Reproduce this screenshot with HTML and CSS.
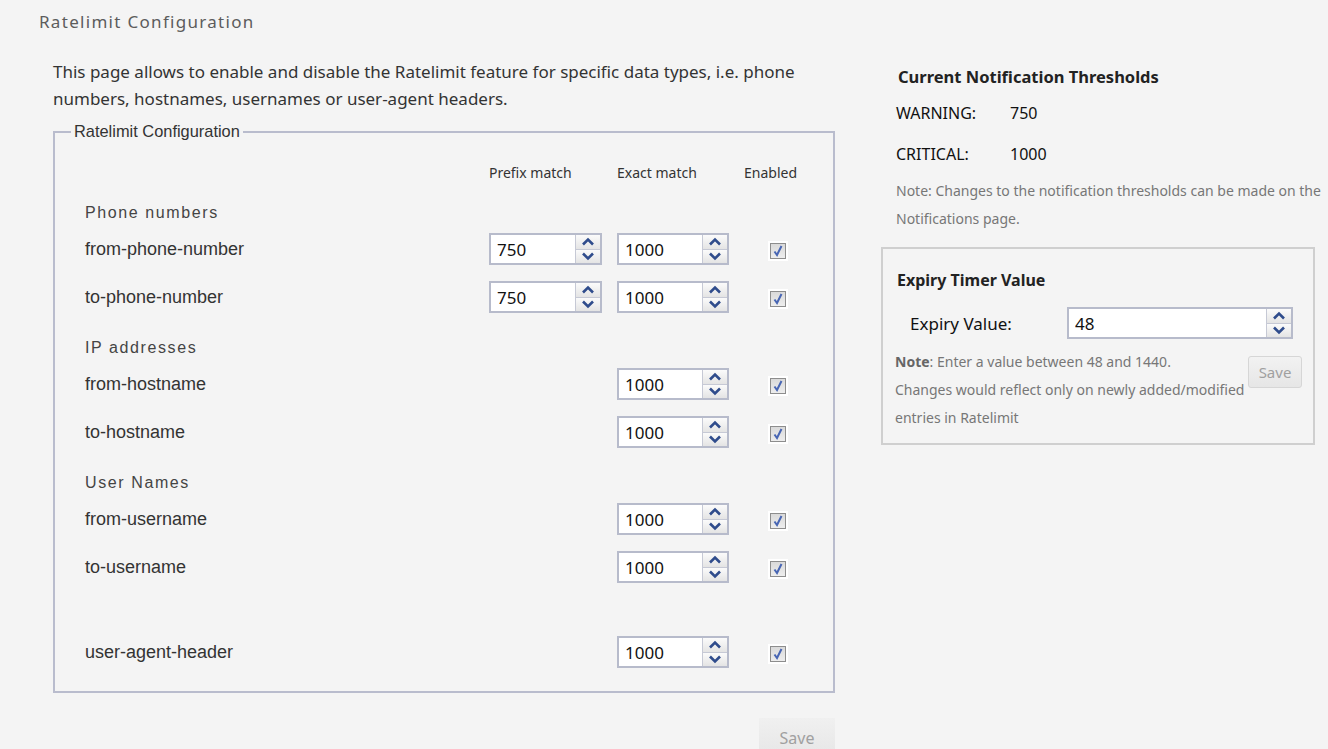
FILE: index.html
```html
<!DOCTYPE html>
<html lang="en">

<head>
    <meta charset="UTF-8">
    <meta name="viewport" content="width=device-width, initial-scale=1.0">
    <title>Ratelimit Configuration</title>
    <link rel="stylesheet" href="styles.css">
</head>

<body>
    <h1 class="page-title">Ratelimit Configuration</h1>

    <div class="main">
        <div class="left-col">
            <p class="intro">This page allows to enable and disable the Ratelimit feature for specific data types, i.e. phone<br>numbers, hostnames, usernames or user-agent headers.</p>

            <fieldset class="rl-box">
                <legend>Ratelimit Configuration</legend>
                <div class="rl-inner">
                    <div class="rl-row rl-head">
                        <span></span>
                        <span>Prefix match</span>
                        <span>Exact match</span>
                        <span>Enabled</span>
                    </div>

                    <div class="group-title">Phone numbers</div>
                    <div class="rl-row">
                        <span class="rl-label">from-phone-number</span>
                        <div class="spin"><input type="text" value="750"><span class="arrows"><span class="up"></span><span class="dn"></span></span></div>
                        <div class="spin"><input type="text" value="1000"><span class="arrows"><span class="up"></span><span class="dn"></span></span></div>
                        <span class="chk"></span>
                    </div>
                    <div class="rl-row">
                        <span class="rl-label">to-phone-number</span>
                        <div class="spin"><input type="text" value="750"><span class="arrows"><span class="up"></span><span class="dn"></span></span></div>
                        <div class="spin"><input type="text" value="1000"><span class="arrows"><span class="up"></span><span class="dn"></span></span></div>
                        <span class="chk"></span>
                    </div>

                    <div class="group-title">IP addresses</div>
                    <div class="rl-row">
                        <span class="rl-label">from-hostname</span>
                        <span></span>
                        <div class="spin"><input type="text" value="1000"><span class="arrows"><span class="up"></span><span class="dn"></span></span></div>
                        <span class="chk"></span>
                    </div>
                    <div class="rl-row">
                        <span class="rl-label">to-hostname</span>
                        <span></span>
                        <div class="spin"><input type="text" value="1000"><span class="arrows"><span class="up"></span><span class="dn"></span></span></div>
                        <span class="chk"></span>
                    </div>

                    <div class="group-title">User Names</div>
                    <div class="rl-row">
                        <span class="rl-label">from-username</span>
                        <span></span>
                        <div class="spin"><input type="text" value="1000"><span class="arrows"><span class="up"></span><span class="dn"></span></span></div>
                        <span class="chk"></span>
                    </div>
                    <div class="rl-row">
                        <span class="rl-label">to-username</span>
                        <span></span>
                        <div class="spin"><input type="text" value="1000"><span class="arrows"><span class="up"></span><span class="dn"></span></span></div>
                        <span class="chk"></span>
                    </div>

                    <div class="rl-row ua-row">
                        <span class="rl-label">user-agent-header</span>
                        <span></span>
                        <div class="spin"><input type="text" value="1000"><span class="arrows"><span class="up"></span><span class="dn"></span></span></div>
                        <span class="chk"></span>
                    </div>
                </div>
            </fieldset>

            <div class="save-bar">
                <button class="btn-save big" disabled>Save</button>
            </div>
        </div>

        <div class="right-col">
            <h3 class="thr-title">Current Notification Thresholds</h3>
            <div class="thr-row"><span class="thr-label">WARNING:</span><span>750</span></div>
            <div class="thr-row"><span class="thr-label">CRITICAL:</span><span>1000</span></div>
            <p class="note">Note: Changes to the notification thresholds can be made on the<br>Notifications page.</p>

            <div class="expiry-box">
                <h3 class="expiry-title">Expiry Timer Value</h3>
                <div class="expiry-row">
                    <span class="expiry-label">Expiry Value:</span>
                    <div class="spin wide"><input type="text" value="48"><span class="arrows"><span class="up"></span><span class="dn"></span></span></div>
                </div>
                <div class="expiry-foot">
                    <p class="note"><b>Note</b>: Enter a value between 48 and 1440.<br>Changes would reflect only on newly added/modified<br>entries in Ratelimit</p>
                    <button class="btn-save small" disabled>Save</button>
                </div>
            </div>
        </div>
    </div>

    <script>
        // spinner chevrons and checkbox marks
        const up = '<svg width="14" height="9" viewBox="0 0 14 9"><path d="M2 7.5 L7 2.5 L12 7.5" fill="none" stroke="#2f4c8c" stroke-width="2.6"/></svg>';
        const dn = '<svg width="14" height="9" viewBox="0 0 14 9"><path d="M2 1.5 L7 6.5 L12 1.5" fill="none" stroke="#2f4c8c" stroke-width="2.6"/></svg>';
        const chk = '<svg width="20" height="20" viewBox="0 0 20 20">' +
            '<defs><linearGradient id="cg" x1="0" y1="0" x2="0" y2="1"><stop offset="0" stop-color="#d9d9d9"/><stop offset="1" stop-color="#eeeeee"/></linearGradient></defs>' +
            '<rect x="2.5" y="2.5" width="15" height="15" fill="url(#cg)" stroke="#8d8d8d"/>' +
            '<path d="M6.5 10.5 L9 14 L13.5 5" fill="none" stroke="#4866b4" stroke-width="2"/></svg>';

        document.querySelectorAll('.up').forEach(el => el.innerHTML = up);
        document.querySelectorAll('.dn').forEach(el => el.innerHTML = dn);
        document.querySelectorAll('.chk').forEach(el => el.innerHTML = chk);
    </script>
</body>

</html>
```

FILE: styles.css
```css
body {
    margin: 0;
    background-color: #f4f4f4;
    font-family: "Noto Sans", sans-serif;
    color: #333;
}

.page-title {
    margin: 0;
    padding: 10px 0 0 39px;
    font-size: 17px;
    font-weight: normal;
    line-height: 24px;
    letter-spacing: 1.3px;
    color: #5c5c5c;
}

.main {
    display: flex;
    margin-top: 24px;
}

.left-col {
    width: 782px;
    margin-left: 53px;
}

.intro {
    margin: 0;
    font-size: 17px;
    line-height: 27px;
    color: #333;
    white-space: nowrap;
}

.rl-box {
    margin: 10px 0 0 0;
    padding: 0;
    border: 2px solid #b9bccd;
}

.rl-box legend {
    margin-left: 16px;
    padding: 0 3px;
    font-family: "Liberation Sans", Arial, sans-serif;
    font-size: 16.4px;
    color: #333;
}

.rl-inner {
    padding: 19px 0 15px 30px;
}

.rl-row {
    display: grid;
    grid-template-columns: 389px 113px 112px 1fr;
    column-gap: 15px;
    align-items: center;
    height: 48px;
}

.rl-head {
    height: 24px;
    font-size: 14px;
}

.group-title {
    padding-top: 15px;
    line-height: 24px;
    font-family: "Liberation Sans", Arial, sans-serif;
    font-size: 16px;
    letter-spacing: 1.6px;
    color: #444;
}

.rl-head + .group-title {
    padding-top: 17px;
}

.rl-label {
    font-family: "Liberation Sans", Arial, sans-serif;
    font-size: 18px;
    color: #333;
}

.ua-row {
    margin-top: 37px;
}

.spin {
    display: flex;
    box-sizing: border-box;
    height: 32px;
    border: 2px solid #b7bbcb;
    background-color: #fff;
}

.spin.wide {
    width: 226px;
}

.spin input {
    flex: 1;
    min-width: 0;
    border: 0;
    outline: none;
    padding: 0 0 0 6px;
    font-family: "Noto Sans", sans-serif;
    font-size: 17px;
    color: #111;
    background: #fff;
}

.arrows {
    display: flex;
    flex-direction: column;
    width: 24px;
    border-left: 1px solid #c6c9d5;
}

.arrows span {
    flex: 1;
    display: flex;
    align-items: center;
    justify-content: center;
    background: linear-gradient(#fbfbfb, #e4e4e4);
}

.arrows span + span {
    border-top: 1px solid #c6c9d5;
}

.arrows svg {
    display: block;
}

.chk {
    display: block;
    width: 20px;
    height: 20px;
    margin: 3px 0 0 24px;
    background: #fff;
}

.chk svg {
    display: block;
}

.save-bar {
    display: flex;
    justify-content: flex-end;
    margin-top: 25px;
}

.btn-save {
    font-family: "Noto Sans", sans-serif;
    color: #a0a0a0;
    cursor: default;
}

.btn-save.big {
    width: 76px;
    height: 40px;
    border: 0;
    font-size: 16px;
    background: linear-gradient(#f0f0f0, #e6e6e6);
}

.right-col {
    width: 447px;
    margin-left: 46px;
}

.thr-title {
    margin: 7px 0 0 0;
    padding-left: 17px;
    font-size: 16.5px;
    line-height: 24px;
    font-weight: bold;
    color: #222;
}

.thr-row {
    display: flex;
    padding-left: 15px;
    font-size: 16px;
    line-height: 41px;
    color: #111;
}

.thr-row:first-of-type {
    margin-top: 4px;
}

.thr-label {
    width: 114px;
}

.note {
    margin: 2px 0 0 0;
    padding-left: 15px;
    font-size: 14px;
    line-height: 28px;
    color: #777;
    white-space: nowrap;
}

.note b {
    color: #666;
}

.expiry-box {
    margin-top: 14px;
    width: 434px;
    box-sizing: border-box;
    border: 2px solid #cfcfcf;
    padding: 19px 11px 11px 12px;
}

.expiry-title {
    margin: 0;
    padding-left: 2px;
    font-size: 16px;
    line-height: 24px;
    font-weight: bold;
    color: #222;
}

.expiry-row {
    display: flex;
    align-items: center;
    margin-top: 15px;
}

.expiry-label {
    width: 157px;
    padding-left: 15px;
    font-size: 17px;
    color: #111;
}

.expiry-foot {
    display: flex;
    justify-content: space-between;
    align-items: flex-start;
    margin-top: 9px;
}

.expiry-foot .note {
    margin: 0;
    padding-left: 0;
}

.btn-save.small {
    margin-top: 8px;
    width: 54px;
    height: 32px;
    border: 1px solid #d6d6d6;
    border-radius: 3px;
    font-size: 15px;
    background: linear-gradient(#f2f2f2, #e6e6e6);
}
```
